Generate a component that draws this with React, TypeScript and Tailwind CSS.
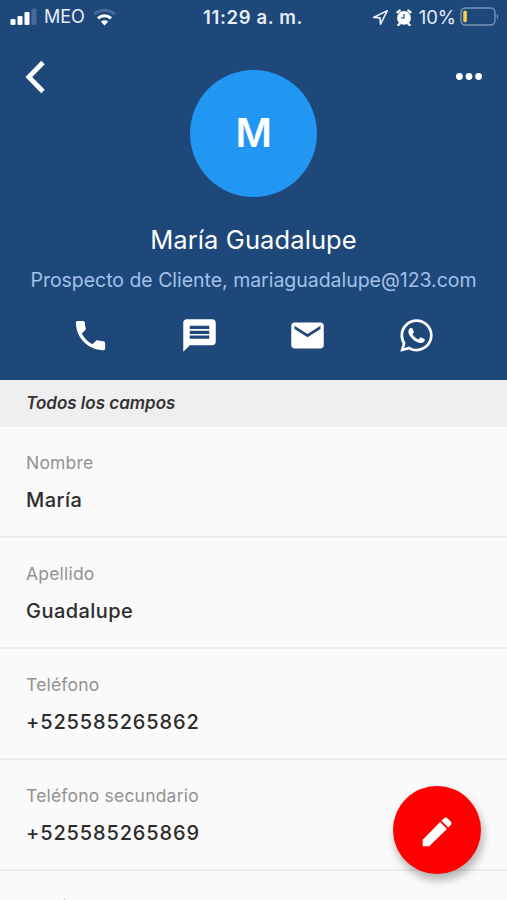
import type { ReactNode } from "react";
import { MdEmail, MdMessage, MdPhone } from "react-icons/md";

interface Field {
  label: string;
  value?: string;
  numeric?: boolean;
}

const fields: Field[] = [
  { label: "Nombre", value: "María" },
  { label: "Apellido", value: "Guadalupe" },
  { label: "Teléfono", value: "+525585265862", numeric: true },
  { label: "Teléfono secundario", value: "+525585265869", numeric: true },
  { label: "Email" },
];

export default function App() {
  return (
    <div className="relative h-[900px] w-[507px] overflow-hidden bg-[#fafafa] font-['Inter','Liberation_Sans',sans-serif]">
      <header className="flex h-[380px] flex-col bg-[#1e477a] text-white">
        <StatusBar />
        <div className="flex h-[163px] items-start justify-between">
          <button type="button" aria-label="Volver" className="ml-6 mt-[26px]">
            <BackIcon />
          </button>
          <div className="ml-[5px] mt-9 grid size-[127px] place-items-center rounded-full bg-[#2196f3] pt-px text-[39.5px] font-semibold leading-none tracking-[-0.5px]">
            M
          </div>
          <button type="button" aria-label="Más opciones" className="mr-[25px] mt-[38px]">
            <MoreIcon />
          </button>
        </div>
        <h1 className="mt-[27px] text-center text-[25.5px] leading-8 tracking-[0.1px]">
          María Guadalupe
        </h1>
        <p className="mt-3 whitespace-nowrap text-center text-[19.5px] leading-6 tracking-[-0.03px] text-[#a3c1e8]">
          Prospecto de Cliente, mariaguadalupe@123.com
        </p>
        <nav className="mt-[22px] grid h-[42px] grid-cols-4 px-9">
          <Action label="Llamar">
            <MdPhone size={39} />
          </Action>
          <Action label="Mensaje">
            <MdMessage size={39} />
          </Action>
          <Action label="Correo">
            <MdEmail size={39} />
          </Action>
          <Action label="WhatsApp">
            <WhatsAppIcon />
          </Action>
        </nav>
      </header>

      <div className="flex h-[47px] items-center bg-[#efefef] pl-[26px] pt-px text-[17px] font-semibold italic text-[#333]">
        Todos los campos
      </div>

      <main>
        {fields.map((field) => (
          <FieldRow key={field.label} {...field} />
        ))}
      </main>

      <button
        type="button"
        aria-label="Editar"
        className="absolute left-[393px] top-[786px] grid size-[88px] place-items-center rounded-full bg-[#fe0000] text-white shadow-[2px_6px_10px_rgba(0,0,0,0.3)]"
      >
        <PencilIcon />
      </button>
    </div>
  );
}

function StatusBar() {
  return (
    <div className="grid h-[34px] grid-cols-[203px_100px_1fr] items-center text-[18px] leading-none text-[#e6eef8]">
      <div className="flex items-center pl-[10px]">
        <SignalIcon />
        <span className="ml-[7px]">MEO</span>
        <WifiIcon />
      </div>
      <span className="whitespace-nowrap text-center text-[18.5px] font-semibold tracking-[0.65px]">
        11:29 a. m.
      </span>
      <div className="flex items-center justify-end pr-2">
        <LocationIcon />
        <AlarmIcon />
        <span className="ml-[7px] mr-1 text-[18.5px]">10%</span>
        <BatteryIcon />
      </div>
    </div>
  );
}

function Action({ label, children }: { label: string; children: ReactNode }) {
  return (
    <button type="button" aria-label={label} className="grid place-items-center">
      {children}
    </button>
  );
}

function FieldRow({ label, value, numeric }: Field) {
  return (
    <div className="h-[111px] border-b-2 border-[#ececec] pl-[26px] pt-6">
      <div className="text-[17.5px] leading-6 tracking-[0.2px] text-[#929292]">{label}</div>
      {value && (
        <div
          className={[
            "mt-[11px] text-[20px] font-medium leading-7 text-[#2c2c2c]",
            numeric ? "tracking-[0.85px]" : "tracking-[0.45px]",
          ].join(" ")}
        >
          {value}
        </div>
      )}
    </div>
  );
}

// --- icons ---
const BackIcon = () => (
  <svg width="22" height="34" viewBox="0 0 22 34" fill="none" stroke="currentColor" strokeWidth="4.8" aria-hidden="true">
    <path d="M19 2.5 4.8 17 19 31.5" />
  </svg>
);

const MoreIcon = () => (
  <svg width="26" height="8" viewBox="0 0 26 8" fill="currentColor" aria-hidden="true">
    <circle cx="3.4" cy="4.5" r="3.4" />
    <circle cx="13" cy="4.5" r="3.4" />
    <circle cx="22.6" cy="4.5" r="3.4" />
  </svg>
);

const SignalIcon = () => (
  <svg width="27" height="18" viewBox="0 0 27 18" fill="#fff" aria-hidden="true">
    <rect x="0.5" y="11" width="5" height="6" rx="1.3" />
    <rect x="7.5" y="8" width="5" height="9" rx="1.3" />
    <rect x="14.5" y="4" width="5" height="13" rx="1.3" />
    <rect x="21.5" y="0.5" width="5" height="16.5" rx="1.3" fill="#486a98" />
  </svg>
);

const WifiIcon = () => (
  <svg width="23" height="18" viewBox="0 0 23 18" fill="none" stroke="#fff" strokeWidth="3" className="ml-[8px]" aria-hidden="true">
    <path d="M1.3 6.3a14.6 14.6 0 0 1 20.4 0" stroke="#486a98" />
    <path d="M5 10.3a9.4 9.4 0 0 1 13 0" />
    <path d="M11.5 17.5 7.9 13.7a5.2 5.2 0 0 1 7.2 0z" fill="#fff" stroke="none" />
  </svg>
);

const LocationIcon = () => (
  <svg width="17" height="17" viewBox="0 0 17 17" fill="none" stroke="currentColor" strokeWidth="1.6" strokeLinejoin="round" aria-hidden="true">
    <path d="M15.2 1.8 1.6 8.4l6.4.5.5 6.3z" />
  </svg>
);

const AlarmIcon = () => (
  <svg width="16" height="17" viewBox="0 0 16 17" className="ml-[7px]" aria-hidden="true">
    <g stroke="#fff" strokeWidth="2.4" strokeLinecap="round">
      <path d="m1.6 3.2 2-1.6M14.4 3.2l-2-1.6M3.4 15l-1 .9M12.6 15l1 .9" />
    </g>
    <circle cx="8" cy="8.9" r="6.9" fill="#fff" />
    <path d="M8 5v4H5" fill="none" stroke="#1e477a" strokeWidth="1.2" />
  </svg>
);

const BatteryIcon = () => (
  <svg width="39" height="19" viewBox="0 0 39 19" fill="none" className="-mt-0.5" aria-hidden="true">
    <rect x="1" y="1" width="34" height="17" rx="4.5" stroke="#7b94b6" strokeWidth="1.4" />
    <rect x="3.3" y="3.8" width="3.5" height="11.4" rx="1.4" fill="#fdd344" />
    <path d="M36.8 6.8c1.8.8 1.8 4.6 0 5.4z" fill="#7b94b6" />
  </svg>
);

const WhatsAppIcon = () => (
  <svg width="39" height="39" viewBox="0 0 24 24" fill="currentColor" aria-hidden="true">
    <path d="M12.04 2C6.58 2 2.13 6.45 2.13 11.91c0 1.75.46 3.45 1.32 4.95L2.05 22l5.25-1.38c1.45.79 3.08 1.21 4.74 1.21 5.46 0 9.91-4.45 9.91-9.91 0-2.65-1.03-5.14-2.9-7.01A9.82 9.82 0 0 0 12.04 2m.01 1.67c2.2 0 4.26.86 5.82 2.42a8.23 8.23 0 0 1 2.41 5.83c0 4.54-3.7 8.23-8.24 8.23-1.48 0-2.93-.39-4.19-1.15l-.3-.17-3.12.82.83-3.04-.2-.32a8.19 8.19 0 0 1-1.26-4.38c.01-4.54 3.7-8.24 8.25-8.24M8.53 7.33c-.16 0-.43.06-.66.31-.22.25-.87.86-.87 2.07 0 1.22.89 2.39 1 2.56.14.17 1.76 2.67 4.25 3.73.59.27 1.05.42 1.41.53.59.19 1.13.16 1.56.1.48-.07 1.46-.6 1.67-1.18s.21-1.07.15-1.18c-.07-.1-.23-.16-.48-.27-.25-.14-1.47-.74-1.69-.82-.23-.08-.37-.12-.56.12-.16.25-.64.81-.78.97-.15.17-.29.19-.53.07-.26-.13-1.06-.39-2-1.23-.74-.66-1.23-1.47-1.38-1.72-.12-.24-.01-.39.11-.5.11-.11.27-.29.37-.44.13-.14.17-.25.25-.41.08-.17.04-.31-.02-.43-.06-.11-.56-1.35-.77-1.84-.2-.48-.4-.42-.56-.43-.14 0-.3-.01-.47-.01" />
  </svg>
);

const PencilIcon = () => (
  <svg width="30" height="30" viewBox="0 0 30 30" fill="currentColor" className="mt-1" aria-hidden="true">
    <path d="M.7 22.8v5.6c0 .6.3.9.9.9h5.6L25 11.9l-6.9-6.9z" />
    <path d="m19.4 3.8 2.4-2.4c1.2-1.2 2.7-1.2 3.9 0l2.9 2.9c1.2 1.2 1.2 2.7 0 3.9l-2.4 2.4z" />
  </svg>
);
